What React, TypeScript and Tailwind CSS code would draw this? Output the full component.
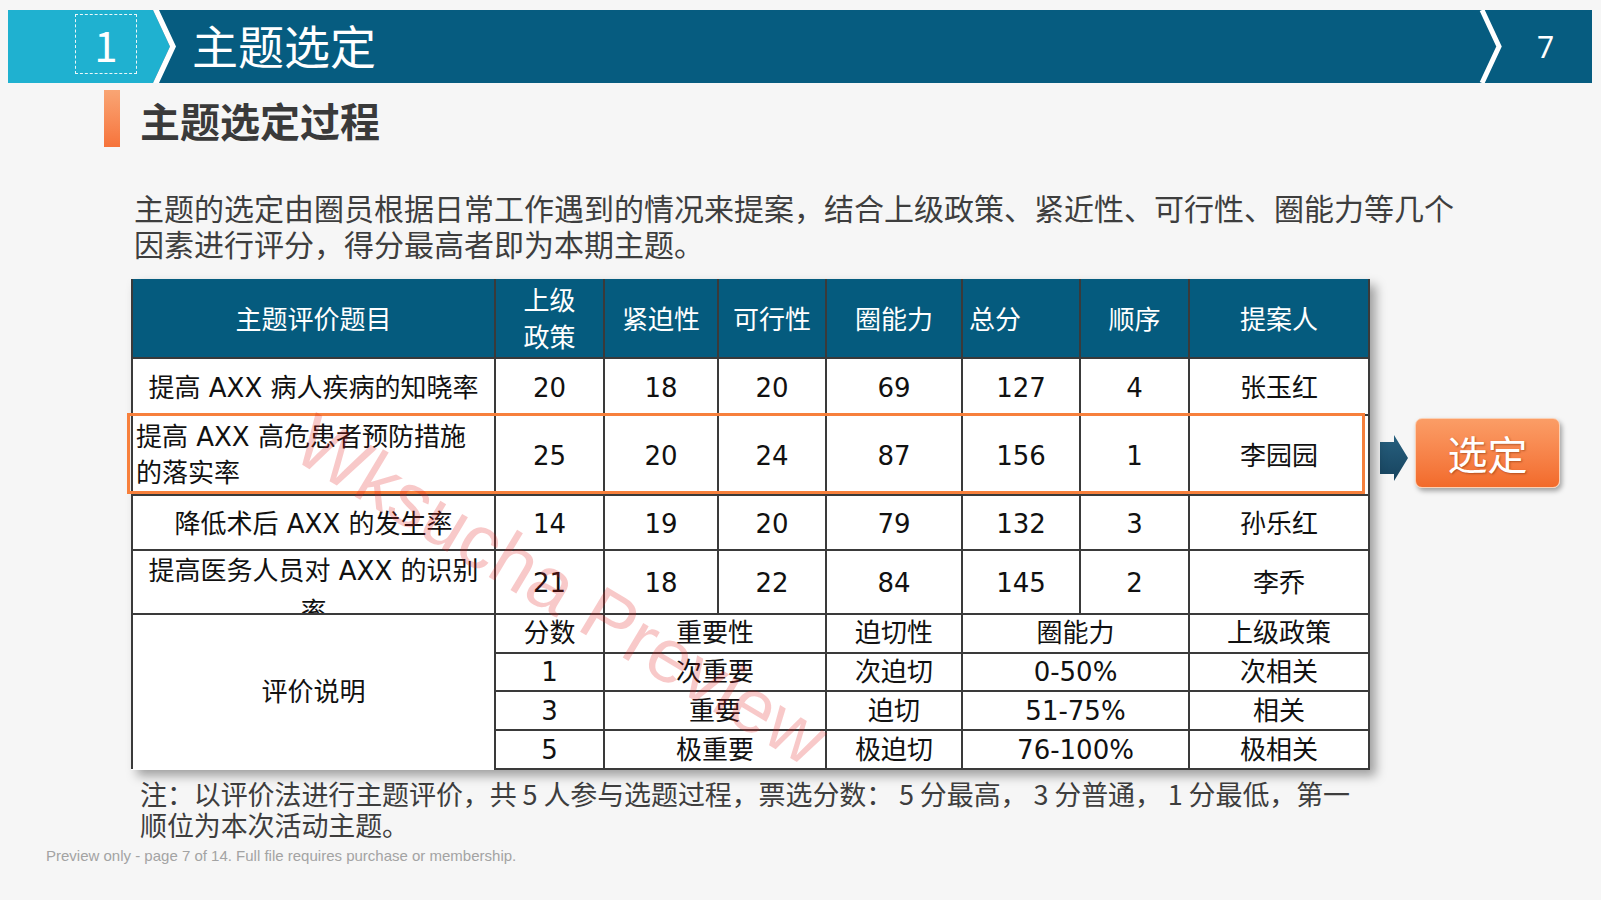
const rows = [
  { title: "提高 AXX 病人疾病的知晓率", vals: ["20", "18", "20", "69", "127", "4", "张玉红"], h: "h-[57px]" },
  { title: "提高 AXX 高危患者预防措施\n的落实率", vals: ["25", "20", "24", "87", "156", "1", "李园园"], h: "h-[80px]" },
  { title: "降低术后 AXX 的发生率", vals: ["14", "19", "20", "79", "132", "3", "孙乐红"], h: "h-[55px]" },
  { title: "提高医务人员对 AXX 的识别\n率", vals: ["21", "18", "22", "84", "145", "2", "李乔"], h: "h-[64px]" },
];

const scale = [
  ["1", "次重要", "次迫切", "0-50%", "次相关"],
  ["3", "重要", "迫切", "51-75%", "相关"],
  ["5", "极重要", "极迫切", "76-100%", "极相关"],
];

const cell = "border-2 border-[#3a3a3a] text-center align-middle p-0";
const head = "border-x-2 border-b-2 border-[#3a3a3a] bg-[#055b7e] text-white font-normal text-center align-middle p-0";

export default function App() {
  return (
    <div className="relative flex h-[900px] w-[1601px] flex-col overflow-hidden bg-[#f6f6f6] font-['Noto_Sans_CJK_SC','Noto_Sans',sans-serif]">
      {/* top bar */}
      <div className="ml-[8px] mt-[10px] flex h-[73px] w-[1584px]">
        <div className="flex w-[145px] items-start bg-[#1fb1d0] pt-[4px]">
          <div className="ml-[67px] flex h-[60px] w-[62px] items-center justify-center border border-dashed border-white/90 text-[42px] leading-none text-white">
            1
          </div>
        </div>
        <svg width="26" height="73" viewBox="0 0 26 73" className="shrink-0">
          <rect width="26" height="73" fill="#065c80" />
          <polygon points="0,0 17,36.5 0,73" fill="#1fb1d0" />
          <polygon points="0,0 6,0 23,36.5 6,73 0,73 17,36.5" fill="#ffffff" />
        </svg>
        <div className="flex flex-1 items-center bg-[#065c80] pb-[5px] pl-[13px] text-[46px] leading-none text-white">
          主题选定
        </div>
        <svg width="24" height="73" viewBox="0 0 24 73" className="shrink-0">
          <rect width="24" height="73" fill="#065c80" />
          <polyline points="3,0 20,36.5 3,73" fill="none" stroke="#ffffff" strokeWidth="5" />
        </svg>
        <div className="flex w-[89px] items-center justify-center bg-[#065c80] pr-[4px] font-['Noto_Sans',sans-serif] text-[30px] text-white">
          7
        </div>
      </div>

      {/* section title */}
      <div className="mt-[7px] flex h-[57px] items-center">
        <div className="ml-[104px] h-[57px] w-[16px] bg-gradient-to-b from-[#f9a574] to-[#f6733a]" />
        <div className="ml-[20px] pt-[3px] text-[40px] font-bold leading-none text-[#3a3a3a]">主题选定过程</div>
      </div>

      {/* intro */}
      <p className="ml-[134px] mt-[42px] whitespace-nowrap text-[30px] leading-[36px] text-[#3e3e3e]">
        主题的选定由圈员根据日常工作遇到的情况来提案，结合上级政策、紧近性、可行性、圈能力等几个
        <br />
        因素进行评分，得分最高者即为本期主题。
      </p>

      {/* table + selection */}
      <div className="mt-[18px] flex items-start">
        <div className="relative ml-[131px] shadow-[6px_6px_10px_rgba(0,0,0,0.35)]">
          <table className="w-[1237px] table-fixed border-collapse bg-white font-['DejaVu_Sans','Noto_Sans_CJK_SC',sans-serif] text-[26px] text-[#111]">
            <colgroup>
              <col className="w-[363px]" />
              <col className="w-[109px]" />
              <col className="w-[114px]" />
              <col className="w-[108px]" />
              <col className="w-[136px]" />
              <col className="w-[118px]" />
              <col className="w-[109px]" />
              <col className="w-[180px]" />
            </colgroup>
            <thead>
              <tr>
                <th className={`${head} h-[78px] pt-[4px]`}>主题评价题目</th>
                <th className={`${head} pt-[4px] leading-[37px]`}>
                  上级
                  <br />
                  政策
                </th>
                <th className={`${head} pt-[4px]`}>紧迫性</th>
                <th className={`${head} pt-[4px]`}>可行性</th>
                <th className={`${head} pt-[4px]`}>圈能力</th>
                <th className={`${head} !text-left pl-[6px] pt-[4px]`}>总分</th>
                <th className={`${head} pt-[4px]`}>顺序</th>
                <th className={`${head} pt-[4px]`}>提案人</th>
              </tr>
            </thead>
            <tbody>
              {rows.map((r, i) => (
                <tr key={i}>
                  {i === 1 ? (
                    <td className={`${cell} ${r.h} !text-left pl-[3px] leading-[36px]`}>
                      提高 AXX 高危患者预防措施
                      <br />
                      的落实率
                    </td>
                  ) : i === 3 ? (
                    <td className={`${cell} ${r.h} !align-top`}>
                      <div className="h-[62px] overflow-hidden leading-[41px]">
                        提高医务人员对 AXX 的识别
                        <br />率
                      </div>
                    </td>
                  ) : (
                    <td className={`${cell} ${r.h} pt-[3px]`}>{r.title}</td>
                  )}
                  {r.vals.map((v, j) => (
                    <td key={j} className={`${cell} pt-[3px]`}>
                      {v}
                    </td>
                  ))}
                </tr>
              ))}
              <tr>
                <td rowSpan={4} className="border-x-2 border-t-2 border-[#3a3a3a] p-0 text-center align-middle">
                  评价说明
                </td>
                <td className={`${cell} h-[39px] leading-[37px]`}>分数</td>
                <td colSpan={2} className={`${cell} leading-[37px]`}>重要性</td>
                <td className={`${cell} leading-[37px]`}>迫切性</td>
                <td colSpan={2} className={`${cell} leading-[37px]`}>圈能力</td>
                <td className={`${cell} leading-[37px]`}>上级政策</td>
              </tr>
              {scale.map((s, i) => (
                <tr key={i}>
                  <td className={`${cell} ${i === 0 ? "h-[37px]" : "h-[39px]"} leading-[36px]`}>{s[0]}</td>
                  <td colSpan={2} className={`${cell} leading-[36px]`}>{s[1]}</td>
                  <td className={`${cell} leading-[36px]`}>{s[2]}</td>
                  <td colSpan={2} className={`${cell} leading-[36px]`}>{s[3]}</td>
                  <td className={`${cell} leading-[36px]`}>{s[4]}</td>
                </tr>
              ))}
            </tbody>
          </table>
          {/* highlight of chosen row */}
          <div className="pointer-events-none absolute left-[-4px] top-[134px] h-[81px] w-[1238px] border-[3px] border-[#f7803c]" />
        </div>

        <svg width="28" height="46" viewBox="0 0 28 46" className="ml-[10px] mt-[156px] shrink-0">
          <defs>
            <linearGradient id="ar" x1="0" y1="0" x2="0" y2="1">
              <stop offset="0" stopColor="#27607f" />
              <stop offset="1" stopColor="#17435e" />
            </linearGradient>
          </defs>
          <polygon points="0,7 14,7 14,0 28,23 14,46 14,39 0,39" fill="url(#ar)" />
        </svg>
        <div className="ml-[7px] mt-[139px] flex h-[70px] w-[145px] items-center justify-center rounded-[7px] border border-[#fcd0b3] bg-gradient-to-b from-[#fb9d66] to-[#f26a2a] text-[40px] leading-none text-white shadow-[2px_3px_5px_rgba(0,0,0,0.35)] [text-shadow:1px_1px_2px_rgba(120,40,0,0.5)]">
          选定
        </div>
      </div>

      {/* note */}
      <p className="ml-[140px] mt-[8px] whitespace-nowrap text-[27px] tracking-[-0.1px] leading-[31px] text-[#3e3e3e]">
        注：以评价法进行主题评价，共 5 人参与选题过程，票选分数： 5 分最高， 3 分普通， 1 分最低，第一
        <br />
        顺位为本次活动主题。
      </p>

      <div className="ml-[46px] mt-[6px] font-['Liberation_Sans',sans-serif] text-[15px] leading-[20px] text-[#a3a3a3]">
        Preview only - page 7 of 14. Full file requires purchase or membership.
      </div>

      {/* watermark */}
      <div className="pointer-events-none absolute left-[561px] top-[590px] -translate-x-1/2 -translate-y-1/2 rotate-[31deg] whitespace-nowrap font-['Liberation_Sans',sans-serif] text-[76px] leading-none text-[rgba(225,30,30,0.24)]">
        Wksucha Preview
      </div>
    </div>
  );
}
